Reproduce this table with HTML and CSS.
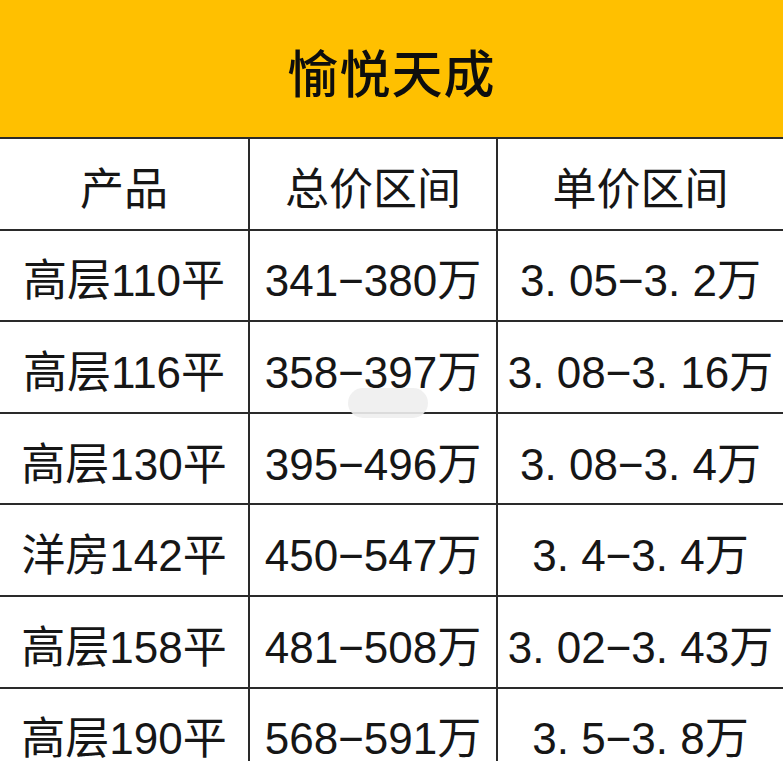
FILE: index.html
```html
<!DOCTYPE html>
<html lang="zh-CN">
<head>
<meta charset="utf-8">
<title>愉悦天成</title>
<link rel="stylesheet" href="styles.css">
</head>
<body>
<div class="sheet">
  <div class="title">愉悦天成</div>
  <div class="grid">
    <div class="cell">产品</div><div class="cell">总价区间</div><div class="cell last">单价区间</div>
    <div class="cell">高层110平</div><div class="cell">341−380万</div><div class="cell last">3. 05−3. 2万</div>
    <div class="cell">高层116平</div><div class="cell">358−397万</div><div class="cell last">3. 08−3. 16万</div>
    <div class="cell">高层130平</div><div class="cell">395−496万</div><div class="cell last">3. 08−3. 4万</div>
    <div class="cell">洋房142平</div><div class="cell">450−547万</div><div class="cell last">3. 4−3. 4万</div>
    <div class="cell">高层158平</div><div class="cell">481−508万</div><div class="cell last">3. 02−3. 43万</div>
    <div class="cell">高层190平</div><div class="cell">568−591万</div><div class="cell last">3. 5−3. 8万</div>
  </div>
  <div class="pill"></div>
</div>
</body>
</html>
```

FILE: styles.css
```css
html, body {
  margin: 0;
  padding: 0;
  background: #ffffff;
}
body {
  font-family: "Liberation Sans", "Noto Sans CJK SC", sans-serif;
  color: #161616;
  overflow: hidden;
}
.sheet {
  position: relative;
  width: 783px;
  height: 761px;
  overflow: hidden;
}
.title {
  height: 139px;
  background: #ffc000;
  border-bottom: 2px solid #2a2a2a;
  display: flex;
  align-items: center;
  justify-content: center;
  padding-top: 4px;
  box-sizing: border-box;
  font-family: "Noto Sans CJK SC", sans-serif;
  font-weight: 500;
  font-size: 51px;
  color: #0e0e0e;
  letter-spacing: 1px;
}
.grid {
  display: grid;
  grid-template-columns: 250px 248px 1fr;
  grid-auto-rows: 91.6px;
}
.cell {
  border-right: 2px solid #2a2a2a;
  border-bottom: 2px solid #2a2a2a;
  display: flex;
  align-items: center;
  justify-content: center;
  font-size: 44px;
  white-space: nowrap;
  padding-top: 4px;
  box-sizing: border-box;
}
.cell.last {
  border-right: none;
}
.pill {
  position: absolute;
  left: 348px;
  top: 388px;
  width: 80px;
  height: 30px;
  border-radius: 15px;
  background: #eeeeee;
  opacity: 0.9;
}
```
